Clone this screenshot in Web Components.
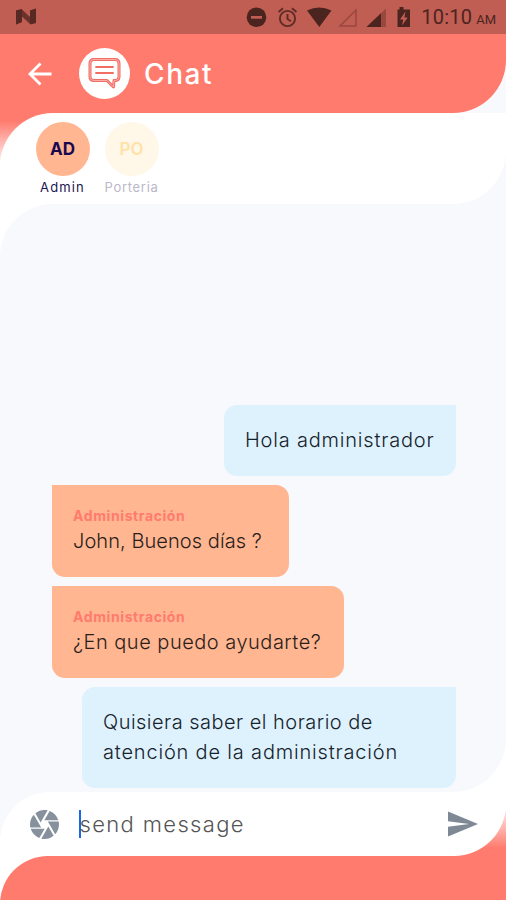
<!DOCTYPE html>
<html lang="es">
<head>
<meta charset="utf-8">
<title>Chat</title>
<style>
  html, body { margin: 0; height: 100%; overflow: hidden; }
  body { font-family: Inter, "Open Sans", sans-serif; --coral: #ff7b6e; --paper: #f8f9fd; }
</style>
</head>
<body>
<chat-app>
  <status-bar slot="top"></status-bar>
  <chat-header slot="top">Chat</chat-header>
  <contact-tabs slot="top">
    <contact-tab initials="AD" style="--ls:1.15px">Admin</contact-tab>
    <contact-tab initials="PO" muted style="--ls:.7px">Porteria</contact-tab>
  </contact-tabs>
  <message-list>
    <chat-bubble mine style="--w:232px;--ls:.8px">Hola administrador</chat-bubble>
    <chat-bubble author="Administración" style="--w:237px;--ls:.07px">John, Buenos días ?</chat-bubble>
    <chat-bubble author="Administración" style="--w:292px;--ls:.5px">¿En que puedo ayudarte?</chat-bubble>
    <chat-bubble mine style="--w:374px"><span style="letter-spacing:.47px">Quisiera saber el horario de</span><br><span style="letter-spacing:.82px">atención de la administración</span></chat-bubble>
  </message-list>
  <message-composer slot="bottom">send message</message-composer>
</chat-app>

<script>
const define = (name, html, setup) => customElements.define(name, class extends HTMLElement {
  connectedCallback() {
    if (this.shadowRoot) return;
    this.attachShadow({ mode: 'open' }).innerHTML = html;
    if (setup) setup(this, this.shadowRoot);
  }
});

define('chat-app', `
  <style>
    :host { display: flex; flex-direction: column; width: 100%; height: 900px; overflow: hidden; background: var(--paper); }
    main { flex: 1; min-height: 0; background: #fff; display: flex; }
    ::slotted(message-list) { flex: 1; }
    footer { height: 44px; background: #fff; overflow: hidden; flex: none; }
    footer div { height: 110px; background: var(--coral); border-top-left-radius: 48px; }
  </style>
  <slot name="top"></slot>
  <main><slot></slot></main>
  <slot name="bottom"></slot>
  <footer><div></div></footer>`);

define('status-bar', `
  <style>
    :host { display: flex; flex: none; box-sizing: border-box; height: 34px; padding: 0 10px 0 16px; align-items: center; justify-content: space-between; background: #c05e54; color: #4c241f; font-family: Roboto, sans-serif; }
    svg { display: block; }
    time { display: flex; align-items: baseline; gap: 4px; font-size: 20px; line-height: 34px; padding-top: 3px; margin-left: 7px; letter-spacing: .2px; }
    small { font-size: 13px; letter-spacing: 0; }
    div { display: flex; align-items: center; }
  </style>
  <svg width="20" height="18" viewBox="0 0 20 18"><path fill="#7b372f" d="M0 2.500 6 1v13L0 16.500ZM14 2.500 20 .500V15l-6 1Z"/><path fill="#4c241f" d="M0 2.500 5.500 1 14 9V2.500l6-2V15l-5.500 1.500L6 8.500V14l-6 2.500Z" opacity=".75"/></svg>
  <div>
    <svg width="168" height="34" viewBox="246 0 168 34" fill="currentColor">
      <circle cx="256.500" cy="17.300" r="9.800"/><path fill="#c05e54" d="M251 16h11v2.700h-11z"/>
      <g fill="none" stroke="#5e2c26" stroke-width="1.900"><circle cx="287.500" cy="18.500" r="7.600"/><path d="M287.500 14v5l3.500 2.200M278.500 12l4.500-3.700M296.500 12 292 8.300"/></g>
      <path d="M307 10.500q12-6 24.500 0L319.300 27Z"/>
      <path d="M340 26 356 10v16Z" fill="none" stroke="#9a473e" stroke-width="1.500"/>
      <path fill="#9a473e" d="M366.500 27 386 8.500V27Z"/><path d="M366.500 27 381 13.200V27Z"/>
      <path d="M399.500 7h4v2.500h6.500V27h-12.500V9.500h2Z"/><path fill="#c05e54" d="m405.500 11.500-5.500 8h3.300l-1.300 6 5.700-8h-3.300Z"/>
    </svg>
    <time>10:10 <small>AM</small></time>
  </div>`);

define('chat-header', `
  <style>
    :host { display: flex; flex: none; box-sizing: border-box; height: 79px; align-items: center; padding-left: 28px; background: var(--coral); border-bottom-right-radius: 53px; color: #fff; }
    .disc { width: 51px; height: 51px; border-radius: 50%; background: #fff; margin: 0 14px 0 27px; }
    h1 { font-size: 28px; line-height: 34px; font-weight: 500; letter-spacing: 1.6px; margin: 0; }
    svg { display: block; }
  </style>
  <svg width="24" height="24" viewBox="0 0 24 24" fill="none" stroke="#fff" stroke-width="2.800"><path d="M23.500 12H2.500M12.500 1.500 2 12l10.500 10.500"/></svg>
  <div class="disc"><svg width="51" height="51" viewBox="0 0 51 51" fill="none" stroke="#f26d63">
    <path stroke-width="3" stroke-linejoin="round" d="M15 11.500H36q4 0 4 4V29q0 3.500-4 3.500h-1L34.500 39 28 32.500H15q-4 0-4-3.500V15.500q0-4 4-4Z"/>
    <path stroke="#fbc9c4" stroke-width=".7" d="M15 11.500H36q4 0 4 4V29q0 3.500-4 3.500h-1L34.500 39 28 32.500H15q-4 0-4-3.500V15.500q0-4 4-4Z"/>
    <path stroke-width="1.800" stroke-linecap="round" d="M17 19h17M17 25h17"/></svg></div>
  <h1><slot></slot></h1>`);

define('contact-tabs', `
  <style>
    :host { display: block; flex: none; height: 91px; background: linear-gradient(90deg, transparent 50%, var(--paper) 50%), linear-gradient(var(--coral) 8px, #fff 54px); }
    div { display: flex; gap: 14px; box-sizing: border-box; height: 91px; padding: 9px 35px; background: #fff; border-radius: 53px 0 53px 0; }
  </style>
  <div><slot></slot></div>`);

define('contact-tab', `
  <style>
    :host { display: flex; flex-direction: column; align-items: center; width: 55px; color: #1d164f; }
    :host([muted]) { color: #bab8c9; }
    b { display: flex; flex: none; align-items: center; justify-content: center; width: 54px; height: 54px; border-radius: 50%; background: #ffb691; color: #18084f; font-size: 17px; font-weight: 700; }
    :host([muted]) b { background: #fff7e7; color: #ffe2a7; font-weight: 600; }
    span { font-size: 13px; line-height: 20px; letter-spacing: var(--ls); white-space: nowrap; margin-top: 1px; }
  </style>
  <b></b><span><slot></slot></span>`, (el, root) => {
  root.querySelector('b').textContent = el.getAttribute('initials');
});

define('message-list', `
  <style>
    :host { display: flex; flex-direction: column; justify-content: flex-end; gap: 9px; box-sizing: border-box; padding: 0 50px 4.500px 52px; background: var(--paper); border-radius: 53px 0 53px 0; }
  </style>
  <slot></slot>`);

define('chat-bubble', `
  <style>
    :host { display: block; box-sizing: border-box; width: var(--w); padding: 20px 0 21px 21px; align-self: flex-start; background: #ffb691; color: #2a1e1b; border-radius: 0 13px 13px 13px; font-size: 20px; font-weight: 300; line-height: 30px; letter-spacing: var(--ls); white-space: nowrap; }
    :host([mine]) { align-self: flex-end; background: #def2fe; color: #17232b; border-radius: 13px 0 13px 13px; }
    b { display: block; font-size: 14px; font-weight: 700; line-height: 22px; letter-spacing: .6px; color: #ff7b6e; }
    b + div { margin-top: -1px; }
  </style>
  <div><slot></slot></div>`, (el, root) => {
  const author = el.getAttribute('author');
  if (!author) return;
  const label = document.createElement('b');
  label.textContent = author;
  root.querySelector('div').before(label);
});

define('message-composer', `
  <style>
    :host { display: block; flex: none; height: 64px; background: linear-gradient(90deg, var(--paper) 50%, transparent 50%), linear-gradient(#fff 10px, var(--coral) 56px); }
    div { display: flex; align-items: center; box-sizing: border-box; height: 64px; padding: 0 28px 0 30px; background: #fff; border-radius: 50px 0 52px 0; }
    i { width: 2px; height: 28px; background: #1769e8; margin: 0 -1px 0 19.500px; }
    span { flex: 1; font-size: 22px; font-weight: 300; color: #555; letter-spacing: 1.35px; line-height: 30px; }
    svg { display: block; }
  </style>
  <div>
    <svg width="29" height="29" viewBox="2 2 20 20" fill="#87919d"><path d="M9.400 10.500l4.770-8.260C13.470 2.090 12.750 2 12 2c-2.400 0-4.600.85-6.320 2.250l3.660 6.350.06-.1zM21.540 9c-.92-2.920-3.150-5.260-6-6.340L11.880 9h9.660zm.26 1h-7.490l.29.500 4.760 8.250C21 16.970 22 14.610 22 12c0-.69-.07-1.350-.2-2zM8.540 12l-3.900-6.750C3.010 7.030 2 9.390 2 12c0 .69.070 1.350.2 2h7.490l-1.150-2zm-6.080 3c.92 2.920 3.150 5.260 6 6.340L12.120 15H2.460zm11.270 0l-3.900 6.760c.7.150 1.420.24 2.170.24 2.400 0 4.600-.85 6.320-2.250l-3.660-6.350-.93 1.600z"/></svg>
    <i></i><span><slot></slot></span>
    <svg width="30" height="26" viewBox="0 0 30 26" fill="#7f8995"><path d="M0 .500 30 13 0 25.500v-9.700L21 13 0 10.200Z"/></svg>
  </div>`);
</script>
</body>
</html>
